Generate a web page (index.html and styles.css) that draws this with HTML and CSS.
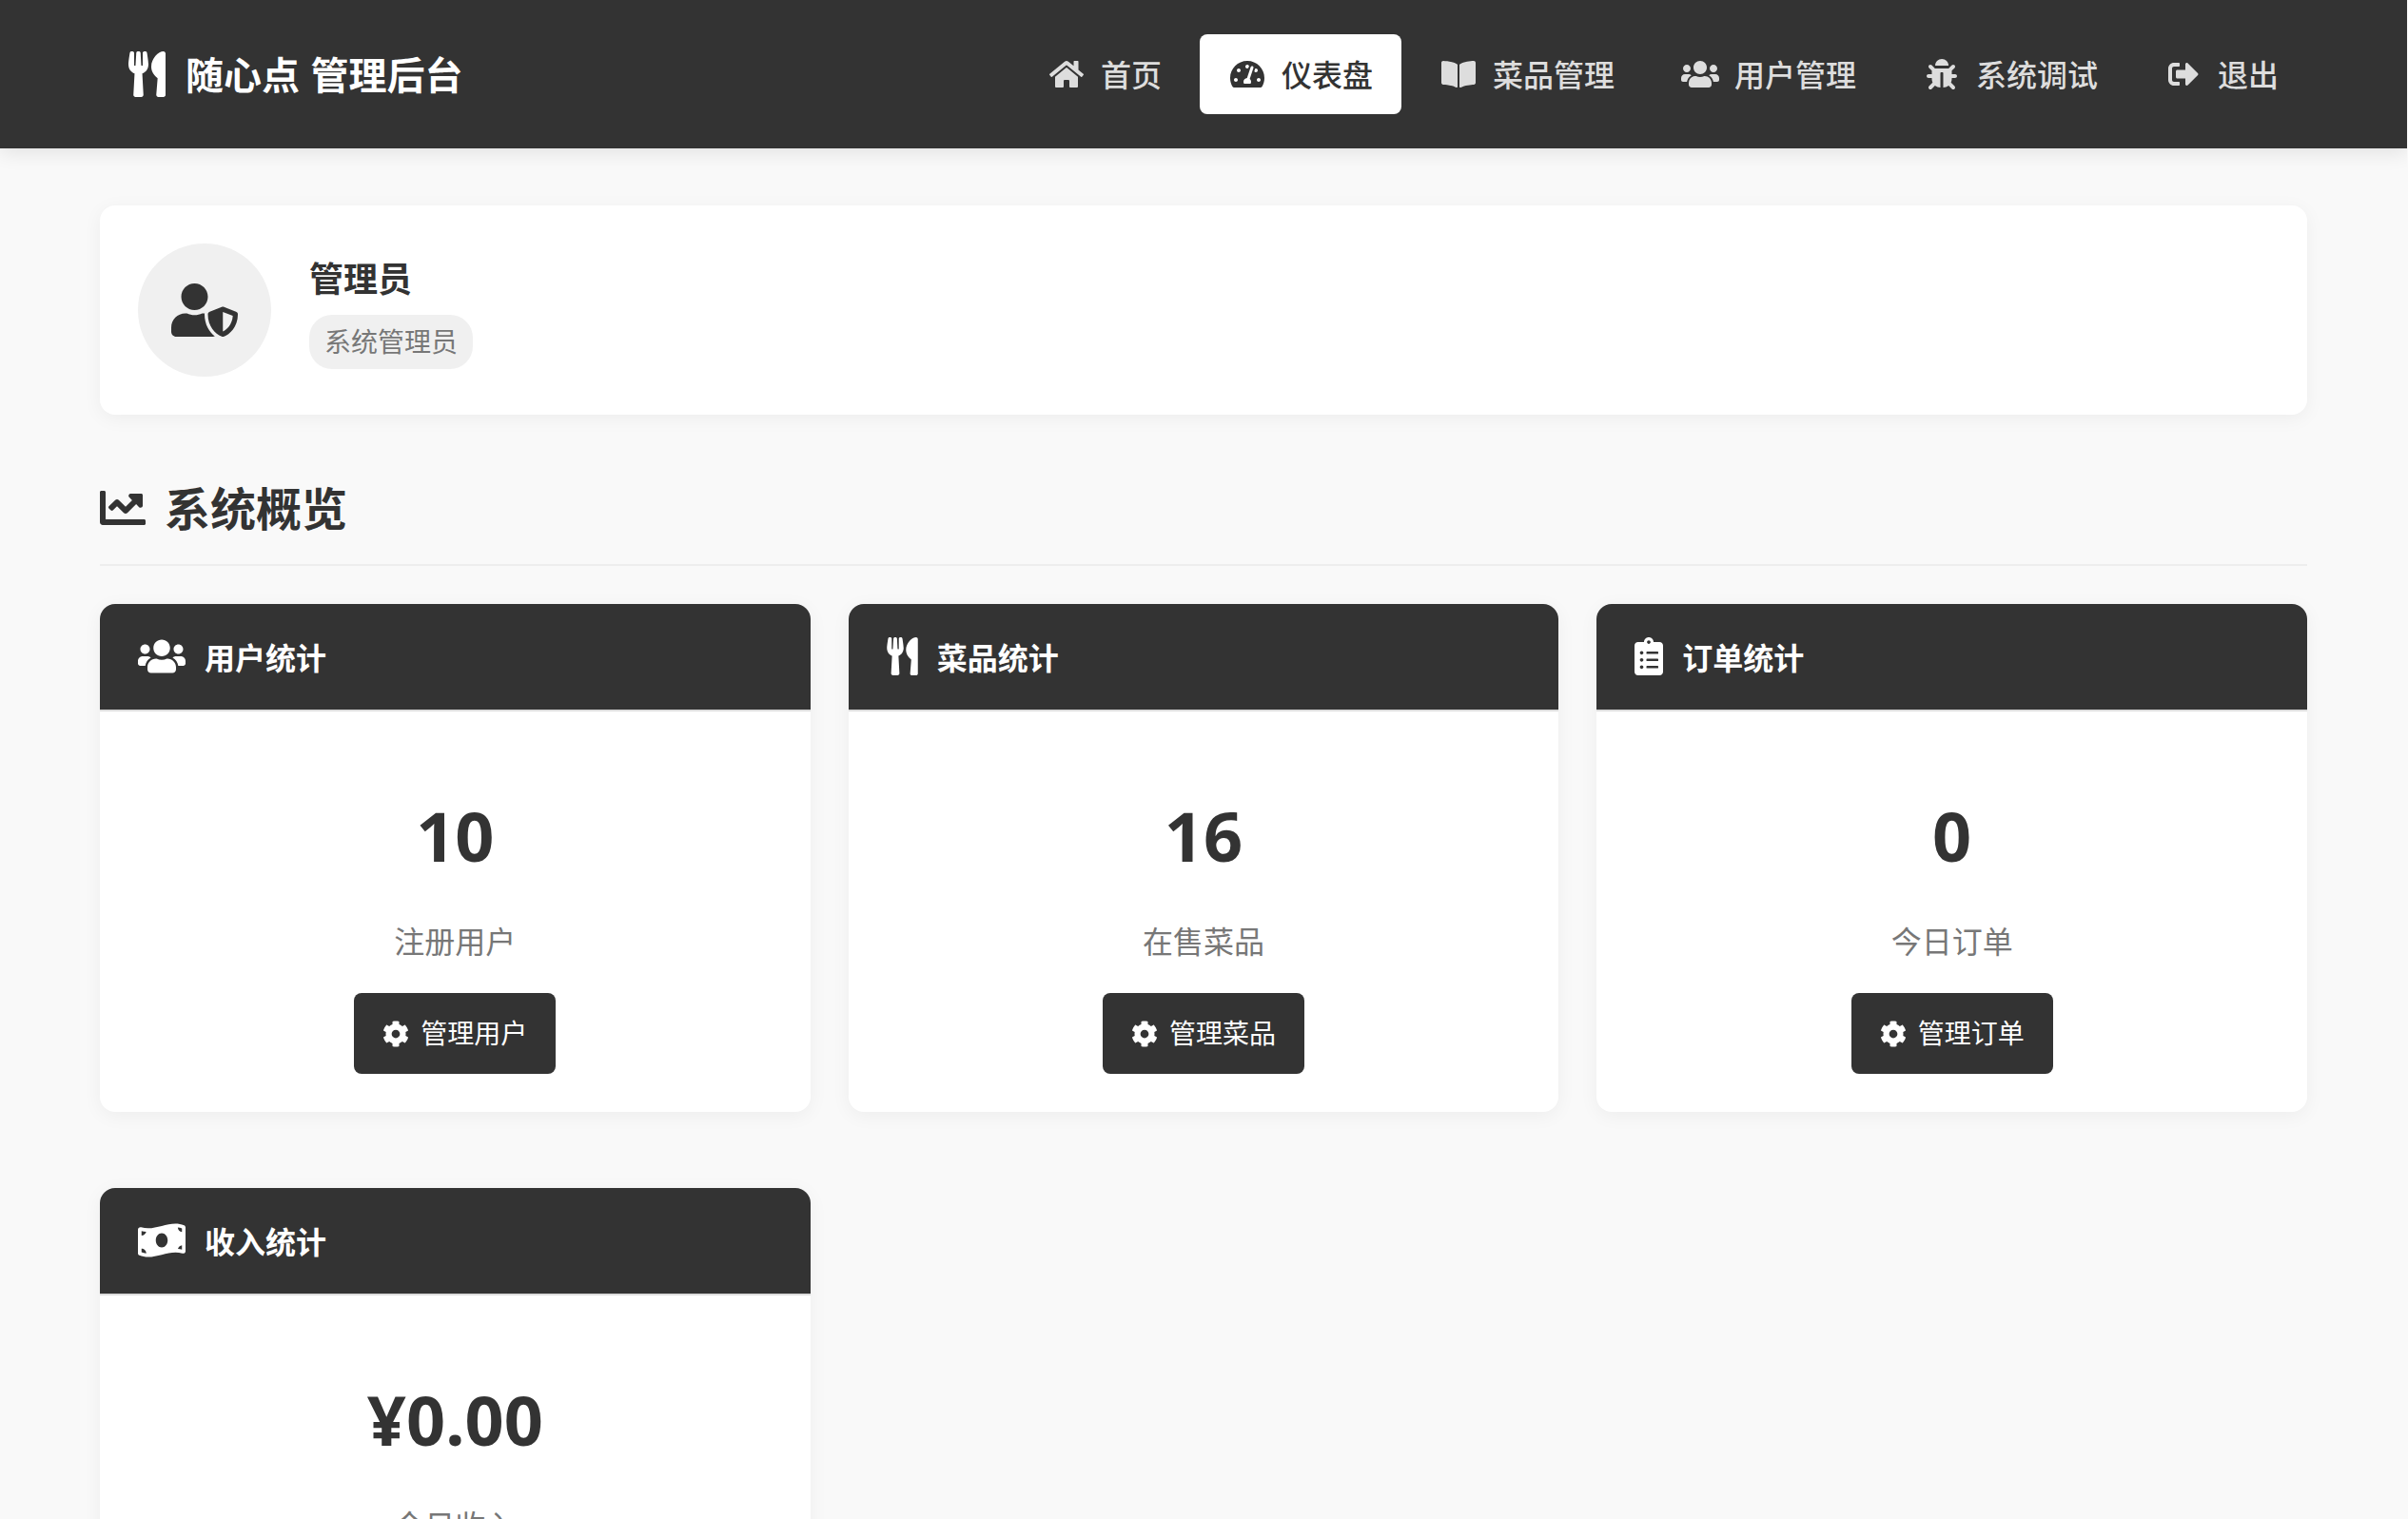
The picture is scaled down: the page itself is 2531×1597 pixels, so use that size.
FILE: index.html
```html
<!DOCTYPE html>
<html lang="zh-CN">
<head>
<meta charset="UTF-8">
<title>随心点 管理后台</title>
<link rel="stylesheet" href="styles.css">
</head>
<body>
<svg class="sprite" aria-hidden="true">
  <symbol id="utensils" viewBox="0 0 416 512"><path d="M207.9 15.2c.8 4.7 16.1 94.5 16.1 128.8 0 52.3-27.8 89.6-68.9 104.6L168 486.700c.7 13.700-10.200 25.300-24 25.300H80c-13.700 0-24.700-11.500-24-25.300l12.900-238.100C27.700 233.600 0 196.200 0 144 0 109.600 15.300 19.900 16.100 15.200 19.300-5.100 61.400-5.400 64 16.300v141.200c1.300 3.400 15.100 3.200 16 0 1.400-25.300 7.900-139.200 8-141.800 3.300-20.800 44.700-20.800 47.900 0 .2 2.700 6.600 116.500 8 141.800.9 3.200 14.800 3.400 16 0V16.300c2.600-21.600 44.800-21.400 48-1.100zm119.200 285.700l-15 185.100c-1.200 14 9.900 26 23.900 26h56c13.300 0 24-10.700 24-24V24c0-13.200-10.700-24-24-24-82.500 0-221.400 178.500-64.900 300.900z"/></symbol>
  <symbol id="home" viewBox="0 0 576 512"><path d="M280.370 148.260L96 300.110V464a16 16 0 0 0 16 16l112.060-.29a16 16 0 0 0 15.920-16V368a16 16 0 0 1 16-16h64a16 16 0 0 1 16 16v95.640a16 16 0 0 0 16 16.050L464 480a16 16 0 0 0 16-16V300L295.670 148.260a12.190 12.190 0 0 0-15.300 0zM571.600 251.470L488 182.560V44.050a12 12 0 0 0-12-12h-56a12 12 0 0 0-12 12v72.610L318.470 43a48 48 0 0 0-61 0L4.340 251.470a12 12 0 0 0-1.600 16.900l25.500 31A12 12 0 0 0 45.150 301l235.220-193.740a12.190 12.190 0 0 1 15.300 0L530.900 301a12 12 0 0 0 16.900-1.600l25.500-31a12 12 0 0 0-1.700-16.930z"/></symbol>
  <symbol id="gauge" viewBox="0 0 576 512"><path d="M288 32C128.940 32 0 160.940 0 320c0 52.800 14.250 102.260 39.060 144.800 5.610 9.620 16.300 15.200 27.440 15.200h443c11.140 0 21.830-5.580 27.440-15.200C561.750 422.260 576 372.800 576 320c0-159.060-128.940-288-288-288zm0 64c14.710 0 26.580 10.130 30.320 23.650-1.110 2.260-2.640 4.230-3.450 6.670l-9.220 27.670c-5.130 3.490-10.970 6.010-17.640 6.010-17.670 0-32-14.330-32-32S270.330 96 288 96zM96 384c-17.670 0-32-14.330-32-32s14.330-32 32-32 32 14.330 32 32-14.330 32-32 32zm48-160c-17.670 0-32-14.330-32-32s14.330-32 32-32 32 14.330 32 32-14.330 32-32 32zm246.770-72.410l-61.330 184C343.130 347.330 352 364.540 352 384c0 11.720-3.380 22.550-8.880 32H232.880c-5.500-9.450-8.880-20.280-8.880-32 0-33.940 26.500-61.430 59.900-63.590l61.340-184.010c4.170-12.560 17.730-19.450 30.360-15.170 12.570 4.190 19.350 17.790 15.170 30.360zm14.660 57.200l15.520-46.550c3.470-1.290 7.130-2.230 11.050-2.230 17.670 0 32 14.330 32 32s-14.330 32-32 32c-11.380-.01-20.890-6.280-26.570-15.220zM480 384c-17.670 0-32-14.330-32-32s14.330-32 32-32 32 14.330 32 32-14.330 32-32 32z"/></symbol>
  <symbol id="book" viewBox="0 0 576 512"><path d="M542.220 32.050c-54.800 3.110-163.720 14.430-230.960 55.590-4.640 2.840-7.270 7.890-7.270 13.170v363.870c0 11.550 12.630 18.850 23.280 13.490 69.180-34.820 169.230-44.320 218.700-46.920 16.890-.89 30.020-14.430 30.020-30.660V62.750c.01-17.710-15.350-31.740-33.770-30.700zM264.730 87.640C197.500 46.480 88.580 35.170 33.780 32.050 15.360 31.010 0 45.040 0 62.750V400.600c0 16.240 13.130 29.780 30.020 30.660 49.490 2.600 149.590 12.110 218.770 46.950 10.620 5.350 23.210-1.940 23.210-13.460V100.630c0-5.290-2.620-10.140-7.270-12.990z"/></symbol>
  <symbol id="users" viewBox="0 0 640 512"><path d="M96 224c35.300 0 64-28.700 64-64s-28.700-64-64-64-64 28.700-64 64 28.700 64 64 64zm448 0c35.300 0 64-28.700 64-64s-28.700-64-64-64-64 28.700-64 64 28.700 64 64 64zm32 32h-64c-17.600 0-33.500 7.100-45.100 18.600 40.300 22.100 68.900 62 75.100 109.400h66c17.700 0 32-14.300 32-32v-32c0-35.300-28.700-64-64-64zm-256 0c61.900 0 112-50.100 112-112S381.900 32 320 32 208 82.100 208 144s50.100 112 112 112zm76.800 32h-8.300c-20.800 10-43.900 16-68.500 16s-47.600-6-68.500-16h-8.300C179.600 288 128 339.600 128 403.200V432c0 26.500 21.500 48 48 48h288c26.500 0 48-21.500 48-48v-28.800c0-63.600-51.600-115.200-115.200-115.200zm-223.700-13.400C161.500 263.100 145.600 256 128 256H64c-35.300 0-64 28.700-64 64v32c0 17.700 14.300 32 32 32h65.900c6.300-47.400 34.900-87.300 75.200-109.400z"/></symbol>
  <symbol id="bug" viewBox="0 0 512 512"><path d="M511.988 288.900c-.478 17.430-15.217 31.100-32.653 31.100H424v16c0 21.864-4.882 42.584-13.600 61.145l60.228 60.228c12.496 12.497 12.496 32.758 0 45.255-12.498 12.497-32.759 12.496-45.256 0l-54.736-54.736C345.886 467.965 314.351 480 280 480V236c0-6.627-5.373-12-12-12h-24c-6.627 0-12 5.373-12 12v244c-34.351 0-65.886-12.035-90.636-32.108l-54.736 54.736c-12.498 12.497-32.759 12.496-45.256 0-12.496-12.497-12.496-32.758 0-45.255l60.228-60.228C92.882 378.584 88 357.864 88 336v-16H32.666C15.230 320 .491 306.330.013 288.900-.484 270.816 14.028 256 32 256h56v-58.745l-46.628-46.628c-12.496-12.497-12.496-32.758 0-45.255 12.498-12.497 32.758-12.497 45.256 0L141.255 160h229.489l54.627-54.627c12.498-12.497 32.758-12.497 45.256 0 12.496 12.497 12.496 32.758 0 45.255L424 197.255V256h56c17.972 0 32.484 14.816 31.988 32.900zM257 0c-61.856 0-112 50.144-112 112h224C369 50.144 318.856 0 257 0z"/></symbol>
  <symbol id="logout" viewBox="0 0 512 512"><path d="M497 273L329 441c-15 15-41 4.500-41-17v-96H152c-13.300 0-24-10.700-24-24v-96c0-13.300 10.700-24 24-24h136V88c0-21.400 25.900-32 41-17l168 168c9.300 9.400 9.300 24.600 0 34zM192 436v-40c0-6.600-5.400-12-12-12H96c-17.700 0-32-14.300-32-32V160c0-17.700 14.300-32 32-32h84c6.600 0 12-5.400 12-12V76c0-6.600-5.400-12-12-12H96c-53 0-96 43-96 96v192c0 53 43 96 96 96h84c6.600 0 12-5.400 12-12z"/></symbol>
  <symbol id="user-shield" viewBox="0 0 640 512"><path d="M622.300 271.100l-115.200-45c-4.100-1.600-12.600-3.700-22.200 0l-115.200 45c-10.700 4.200-17.700 14-17.700 24.900 0 111.600 68.700 188.800 132.900 213.900 9.600 3.700 18 1.600 22.200 0C558.400 489.900 640 420.500 640 296c0-10.900-7-20.700-17.700-24.900zM496 462.400V273.300l95.500 37.300c-5.600 87.100-60.900 135.400-95.500 151.800zM224 256c70.700 0 128-57.300 128-128S294.700 0 224 0 96 57.300 96 128s57.300 128 128 128zm96 40c0-2.500.8-4.800 1.100-7.200-2.500-.1-4.900-.8-7.500-.8h-16.700c-22.200 10.200-46.900 16-72.900 16s-50.600-5.800-72.900-16h-16.700C60.200 288 0 348.200 0 422.400V464c0 26.500 21.500 48 48 48h352c6.800 0 13.300-1.500 19.200-4-54-42.900-99.200-116.700-99.200-212z"/></symbol>
  <symbol id="chart" viewBox="0 0 512 512"><path d="M496 384H64V80c0-8.840-7.160-16-16-16H16C7.160 64 0 71.160 0 80v336c0 17.670 14.330 32 32 32h464c8.840 0 16-7.160 16-16v-32c0-8.840-7.160-16-16-16zM464 96H345.940c-21.380 0-32.090 25.850-16.970 40.970l32.400 32.400L288 242.750l-73.370-73.370c-12.500-12.500-32.760-12.500-45.250 0l-68.690 68.690c-6.250 6.250-6.250 16.380 0 22.630l22.620 22.620c6.250 6.250 16.380 6.250 22.630 0L192 237.250l73.370 73.370c12.500 12.500 32.760 12.500 45.250 0l96-96 32.400 32.400c15.120 15.120 40.970 4.410 40.970-16.970V112c.01-8.840-7.150-16-15.990-16z"/></symbol>
  <symbol id="clipboard" viewBox="0 0 384 512"><path d="M336 64h-80c0-35.300-28.700-64-64-64s-64 28.700-64 64H48C21.500 64 0 85.500 0 112v352c0 26.500 21.500 48 48 48h288c26.500 0 48-21.500 48-48V112c0-26.500-21.500-48-48-48zM96 424c-13.300 0-24-10.700-24-24s10.700-24 24-24 24 10.700 24 24-10.700 24-24 24zm0-96c-13.300 0-24-10.700-24-24s10.700-24 24-24 24 10.700 24 24-10.700 24-24 24zm0-96c-13.300 0-24-10.700-24-24s10.700-24 24-24 24 10.700 24 24-10.700 24-24 24zm96-192c13.300 0 24 10.700 24 24s-10.700 24-24 24-24-10.700-24-24 10.700-24 24-24zm128 368c0 4.400-3.600 8-8 8H168c-4.400 0-8-3.600-8-8v-16c0-4.400 3.600-8 8-8h144c4.400 0 8 3.600 8 8v16zm0-96c0 4.400-3.600 8-8 8H168c-4.400 0-8-3.600-8-8v-16c0-4.400 3.600-8 8-8h144c4.400 0 8 3.600 8 8v16zm0-96c0 4.400-3.600 8-8 8H168c-4.400 0-8-3.600-8-8v-16c0-4.400 3.600-8 8-8h144c4.400 0 8 3.600 8 8v16z"/></symbol>
  <symbol id="money" viewBox="0 0 640 512"><path d="M621.160 54.460C582.370 38.190 543.550 32 504.750 32c-123.170-.01-246.330 62.340-369.500 62.340-30.890 0-61.760-3.920-92.650-13.720-3.470-1.100-6.950-1.620-10.350-1.620C15.040 79 0 92.320 0 110.810v317.260c0 12.630 7.230 24.600 18.840 29.460C57.630 473.810 96.450 480 135.250 480c123.170 0 246.340-62.350 369.510-62.350 30.890 0 61.760 3.920 92.650 13.720 3.470 1.100 6.950 1.620 10.350 1.620 17.210 0 32.250-13.320 32.250-31.810V83.930c-.01-12.640-7.240-24.600-18.850-29.470zM48 132.220c20.120 5.040 41.120 7.570 62.720 8.930C104.840 170.540 79 192.690 48 192.690v-60.470zm0 285v-47.780c34.370 0 62.180 27.270 63.710 61.400-22.530-1.810-43.590-6.310-63.710-13.620zM320 352c-44.190 0-80-42.990-80-96 0-53.020 35.820-96 80-96s80 42.980 80 96c0 53.030-35.830 96-80 96zm272 27.780c-17.520-4.390-35.710-6.850-54.320-8.440 5.870-26.080 27.500-45.880 54.320-49.280v57.720zm0-236.110c-30.890-3.910-54.860-29.700-55.810-61.550 19.540 2.170 38.090 6.230 55.810 12.660v48.890z"/></symbol>
  <symbol id="cog" viewBox="0 0 512 512"><path d="M487.400 315.700l-42.600-24.600c4.300-23.200 4.300-47 0-70.200l42.600-24.600c4.900-2.800 7.100-8.600 5.500-14-11.100-35.600-30-67.800-54.700-94.600-3.800-4.100-10-5.100-14.800-2.300L380.800 110c-17.900-15.400-38.500-27.300-60.800-35.100V25.800c0-5.600-3.900-10.500-9.400-11.700-36.700-8.200-74.300-7.800-109.200 0-5.500 1.200-9.400 6.100-9.400 11.700V75c-22.200 7.900-42.800 19.800-60.800 35.100L88.700 85.500c-4.900-2.800-11-1.900-14.800 2.300-24.700 26.700-43.600 58.900-54.700 94.600-1.700 5.400.6 11.200 5.500 14L67.300 221c-4.300 23.200-4.300 47 0 70.200l-42.600 24.600c-4.900 2.800-7.100 8.600-5.500 14 11.100 35.600 30 67.800 54.700 94.600 3.800 4.100 10 5.100 14.800 2.300l42.600-24.600c17.900 15.400 38.500 27.300 60.800 35.100v49.200c0 5.600 3.900 10.500 9.400 11.700 36.700 8.200 74.300 7.800 109.200 0 5.500-1.200 9.400-6.100 9.400-11.700v-49.200c22.200-7.900 42.800-19.800 60.800-35.100l42.600 24.600c4.900 2.800 11 1.900 14.800-2.300 24.700-26.700 43.600-58.900 54.700-94.600 1.500-5.500-.7-11.300-5.600-14.100zM256 336c-44.100 0-80-35.900-80-80s35.900-80 80-80 80 35.900 80 80-35.900 80-80 80z"/></symbol>
</svg>

<header class="topbar">
  <div class="topbar-inner">
    <div class="brand"><svg class="icon brand-icon"><use href="#utensils"/></svg><span>随心点 管理后台</span></div>
    <nav class="nav">
      <a class="nav-link"><svg class="icon"><use href="#home"/></svg><span>首页</span></a>
      <a class="nav-link active"><svg class="icon"><use href="#gauge"/></svg><span>仪表盘</span></a>
      <a class="nav-link"><svg class="icon"><use href="#book"/></svg><span>菜品管理</span></a>
      <a class="nav-link"><svg class="icon"><use href="#users"/></svg><span>用户管理</span></a>
      <a class="nav-link"><svg class="icon"><use href="#bug"/></svg><span>系统调试</span></a>
      <a class="nav-link"><svg class="icon"><use href="#logout"/></svg><span>退出</span></a>
    </nav>
  </div>
</header>

<main class="container">
  <section class="profile">
    <div class="avatar"><svg class="icon"><use href="#user-shield"/></svg></div>
    <div class="profile-info">
      <h3 class="profile-name">管理员</h3>
      <span class="role">系统管理员</span>
    </div>
  </section>

  <h2 class="section-title"><svg class="icon"><use href="#chart"/></svg><span>系统概览</span></h2>

  <div class="cards">
    <article class="card">
      <div class="card-header"><svg class="icon wide"><use href="#users"/></svg><span>用户统计</span></div>
      <div class="card-body">
        <div class="number">10</div>
        <div class="label">注册用户</div>
        <a class="btn"><svg class="icon"><use href="#cog"/></svg><span>管理用户</span></a>
      </div>
    </article>
    <article class="card">
      <div class="card-header"><svg class="icon fork"><use href="#utensils"/></svg><span>菜品统计</span></div>
      <div class="card-body">
        <div class="number">16</div>
        <div class="label">在售菜品</div>
        <a class="btn"><svg class="icon"><use href="#cog"/></svg><span>管理菜品</span></a>
      </div>
    </article>
    <article class="card">
      <div class="card-header"><svg class="icon narrow"><use href="#clipboard"/></svg><span>订单统计</span></div>
      <div class="card-body">
        <div class="number">0</div>
        <div class="label">今日订单</div>
        <a class="btn"><svg class="icon"><use href="#cog"/></svg><span>管理订单</span></a>
      </div>
    </article>
    <article class="card">
      <div class="card-header"><svg class="icon wide"><use href="#money"/></svg><span>收入统计</span></div>
      <div class="card-body">
        <div class="number">¥0.00</div>
        <div class="label">今日收入</div>
      </div>
    </article>
  </div>
</main>
</body>
</html>
```
FILE: styles.css
```css
* { box-sizing: border-box; margin: 0; padding: 0; }

html { background: #f9f9f9; height: 100%; overflow: hidden; }

body {
  width: 2530px;
  height: 1597px;
  overflow: hidden;
  background: #f9f9f9;
  color: #333;
  font-family: "Noto Sans", "Noto Sans CJK SC", sans-serif;
  font-size: 32px;
}

.sprite { display: none; }

.icon { display: block; flex: none; fill: currentColor; }

.topbar {
  height: 156px;
  background: #333;
  box-shadow: 0 4px 20px rgba(0, 0, 0, .1);
}

.topbar-inner {
  width: 2320px;
  height: 100%;
  margin: 0 auto;
  padding-left: 30px;
  display: flex;
  align-items: center;
  justify-content: space-between;
}

.brand {
  display: flex;
  align-items: center;
  gap: 21px;
  color: #fff;
  font-size: 40px;
  font-weight: 700;
  line-height: 60px;
  word-spacing: 1px;
}

.brand span { padding-top: 2px; }

.brand-icon { width: 39px; height: 48px; }

.nav { display: flex; gap: 10px; }

.nav-link {
  display: flex;
  align-items: center;
  gap: 16px;
  height: 84px;
  padding: 0 30px;
  border-radius: 8px;
  color: #ddd;
  font-weight: 500;
  line-height: 48px;
}

.nav-link span { padding-top: 2px; }

.nav-link .icon { width: 40px; height: 32px; }

.nav-link.active { background: #fff; color: #333; }

.container { width: 2320px; margin: 0 auto; padding-top: 60px; }

.profile {
  display: flex;
  align-items: center;
  gap: 40px;
  height: 220px;
  padding: 40px;
  background: #fff;
  border-radius: 16px;
  box-shadow: 0 4px 20px rgba(0, 0, 0, .05);
}

.avatar {
  display: flex;
  align-items: center;
  justify-content: center;
  width: 140px;
  height: 140px;
  border-radius: 50%;
  background: #f0f0f0;
}

.avatar .icon { width: 70px; height: 56px; }

.profile-info {
  display: flex;
  flex-direction: column;
  align-items: flex-start;
  gap: 8px;
}

.profile-name { font-size: 36px; font-weight: 700; line-height: 59px; }

.role {
  padding: 6px 16px;
  border-radius: 24px;
  background: #f0f0f0;
  color: #777;
  font-size: 28px;
  line-height: 45px;
}

.section-title {
  display: flex;
  align-items: center;
  gap: 20px;
  height: 119px;
  margin: 40px 0;
  padding-bottom: 2px;
  border-bottom: 2px solid #eee;
  font-size: 48px;
  font-weight: 700;
  line-height: 76px;
}

.section-title span { padding-top: 3px; }

.section-title .icon { width: 48px; height: 48px; }

.cards {
  display: grid;
  grid-template-columns: repeat(3, 1fr);
  gap: 80px 40px;
}

.card {
  height: 534px;
  overflow: hidden;
  background: #fff;
  border-radius: 16px;
  box-shadow: 0 4px 20px rgba(0, 0, 0, .05);
}

.card-header {
  display: flex;
  align-items: center;
  gap: 20px;
  height: 113px;
  padding: 0 40px 1px;
  background: #333;
  border-bottom: 2px solid #ddd;
  color: #fff;
  font-weight: 700;
  line-height: 51px;
}

.card-header span { padding-top: 3px; }

.card-header .icon { height: 40px; }
.card-header .wide { width: 50px; }
.card-header .fork { width: 33px; }
.card-header .narrow { width: 30px; }

.card-body {
  display: flex;
  flex-direction: column;
  align-items: center;
  padding: 73px 40px 40px;
}

.number { font-size: 72px; font-weight: 700; line-height: 115px; }

.label { margin: 27px 0 28px; color: #777; line-height: 53px; }

.btn {
  display: flex;
  align-items: center;
  gap: 12px;
  height: 85px;
  padding: 0 30px;
  border-radius: 8px;
  background: #333;
  color: #fff;
  font-size: 28px;
  line-height: 45px;
}

.btn .icon { width: 28px; height: 28px; }
```
